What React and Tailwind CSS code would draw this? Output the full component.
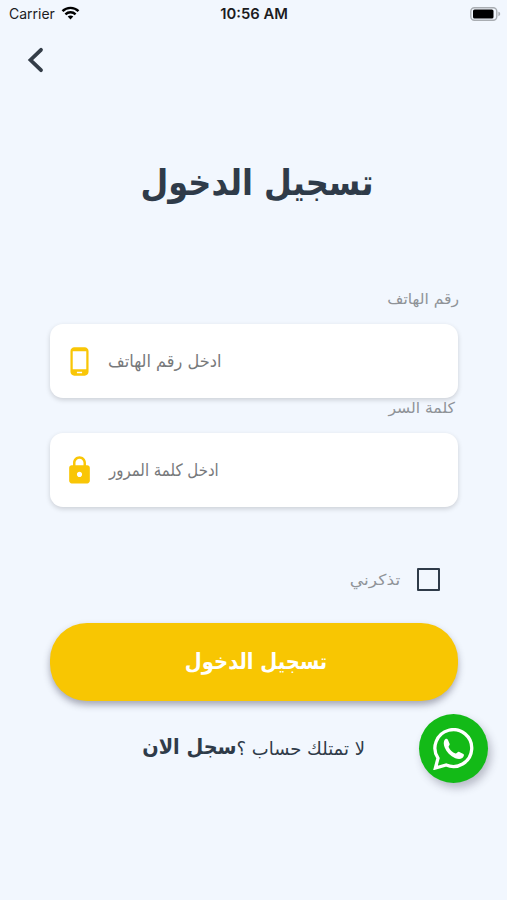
import React from 'react';
import { MdLock, MdPhoneAndroid } from 'react-icons/md';

const StatusBar = () => (
  <div dir="ltr" className="h-7 grid grid-cols-3 items-center pl-[9px] pr-[6px] font-['Inter'] text-[14px] text-[#1c1c1e]">
    <div className="flex items-center gap-[6px]">
      <span className="-mt-[2px]">Carrier</span>
      <svg className="-mt-[2px]" width="19" height="14" viewBox="0 0 18 14" fill="none" stroke="#000" strokeWidth="2.4">
        <path d="M1 5.2C5.4 0.8 12.6 0.8 17 5.2" />
        <path d="M3.9 8.3C6.8 5.5 11.2 5.5 14.1 8.3" />
        <path d="M6.2 10.6C7.8 9.1 10.2 9.1 11.8 10.6L9 13.4Z" fill="#000" stroke="none" />
      </svg>
    </div>
    <span className="mr-[2px] text-center text-[14.8px] font-semibold whitespace-nowrap">10:56 AM</span>
    <div className="flex justify-end">
      <svg className="-mt-px" width="31" height="14" viewBox="0 0 31 14">
        <rect x="0.8" y="0.8" width="26" height="12.4" rx="3.6" fill="none" stroke="#a9adb2" strokeWidth="1.4" />
        <rect x="3" y="2.5" width="20.5" height="9" rx="1.6" fill="#000" />
        <path d="M28.4 4.8C30.8 5.4 30.8 8.6 28.4 9.2Z" fill="#a9adb2" />
      </svg>
    </div>
  </div>
);

const WhatsappIcon = () => (
  <svg className="size-[42px]" viewBox="0 0 42 42" fill="none">
    <path
      d="M5 30.2A18.4 18.4 0 1 1 13.2 37L2.4 40Z"
      stroke="currentColor"
      strokeWidth="3.3"
      strokeLinejoin="miter"
    />
    <path
      d="M11.3 12.6C12.2 10.5 14.2 10.3 15 12L16.7 15.9C17 17 15.4 17.8 15.6 18.9C17 22 19.4 24.2 22.5 25.5C23.8 25.7 24.6 23.4 25.9 23.8L30.4 26C31.6 26.7 30.8 28.9 29.3 30C27.3 31.5 24.8 31.2 22.3 30.2C17.3 28 13.5 24 11.6 19.2C10.6 16.8 10.5 14.5 11.3 12.6Z"
      fill="currentColor"
    />
  </svg>
);

const Field = ({ icon: Icon, children }) => (
  <div dir="ltr" className="h-[74px] flex items-center rounded-[13px] bg-white pl-[14px] shadow-[0_2px_5px_rgba(0,0,0,0.16)]">
    <Icon className="size-[31px] shrink-0 text-[#f9c606]" />
    {children}
  </div>
);

const App = () => {
  return (
    <div dir="rtl" className="relative h-[900px] w-[507px] overflow-hidden bg-[#f2f7fe] font-['DejaVu_Sans',sans-serif]">
      <StatusBar />

      <div dir="ltr" className="h-16 pl-[27px] pt-[19px]">
        <svg width="18" height="26" viewBox="0 0 18 26" fill="none" stroke="#343d48" strokeWidth="3.8" strokeLinecap="round">
          <path d="M14 2.8L3.5 13L14 23.2" />
        </svg>
      </div>

      <h1 className="mt-[59px] h-16 flex items-center justify-center pl-[7px] text-[36px] leading-none font-bold text-[#2f3b49] whitespace-nowrap">
        <span className="scale-x-[0.89]">تسجيل الدخول</span>
      </h1>

      <div className="ml-[48px] mr-[49px] mt-[69px] pl-[2px]">
        <div className="h-10 pt-[5px] text-[15px] leading-5 text-[#8f9398]">
          <span className="inline-block origin-right translate-x-px scale-x-[1.04]">رقم الهاتف</span>
        </div>
        <Field icon={MdPhoneAndroid}>
          <span dir="rtl" className="ml-[13px] mt-[2px] inline-block origin-left scale-x-[0.95] text-[17px] text-[#77797b] whitespace-nowrap">ادخل رقم الهاتف</span>
        </Field>
        <div className="h-[35px] pr-[3px] text-[15px] leading-5 text-[#8f9398]">
          <span className="inline-block origin-right scale-x-[1.04]">كلمة السر</span>
        </div>
        <Field icon={MdLock}>
          <span dir="rtl" className="ml-[14px] mt-[2px] inline-block origin-left scale-x-[0.88] text-[17px] text-[#77797b] whitespace-nowrap">ادخل كلمة المرور</span>
        </Field>

        <div className="mt-[60px] h-[25px] flex items-center gap-[17px] pr-[18px]">
          <span className="size-[23px] rounded-[1px] border-[2.5px] border-[#2f3b49]"></span>
          <span className="origin-right scale-x-[1.14] text-[15px] leading-5 text-[#8f9398]">تذكرني</span>
        </div>

        <button className="mt-[31px] flex h-[78px] w-full items-center justify-center rounded-[37px] bg-[#f8c602] pl-[4px] text-[22px] font-bold text-white shadow-[0_4px_7px_rgba(60,60,80,0.42)]">
          <span className="scale-x-[0.89] -translate-y-px">تسجيل الدخول</span>
        </button>
      </div>

      <div className="mt-[29px] mr-[142px] flex h-9 items-center whitespace-nowrap text-[#2f3b49]">
        <span className="text-[18px]">لا تمتلك حساب ؟</span>
        <span className="origin-right scale-x-[0.92] text-[21px] font-bold">سجل الان</span>
      </div>

      <button className="absolute left-[419px] top-[714px] flex size-[69px] items-center justify-center rounded-full bg-[#13ba17] text-white shadow-[3px_5px_8px_rgba(60,60,80,0.32)]">
        <WhatsappIcon />
      </button>
    </div>
  );
};

export default App;
